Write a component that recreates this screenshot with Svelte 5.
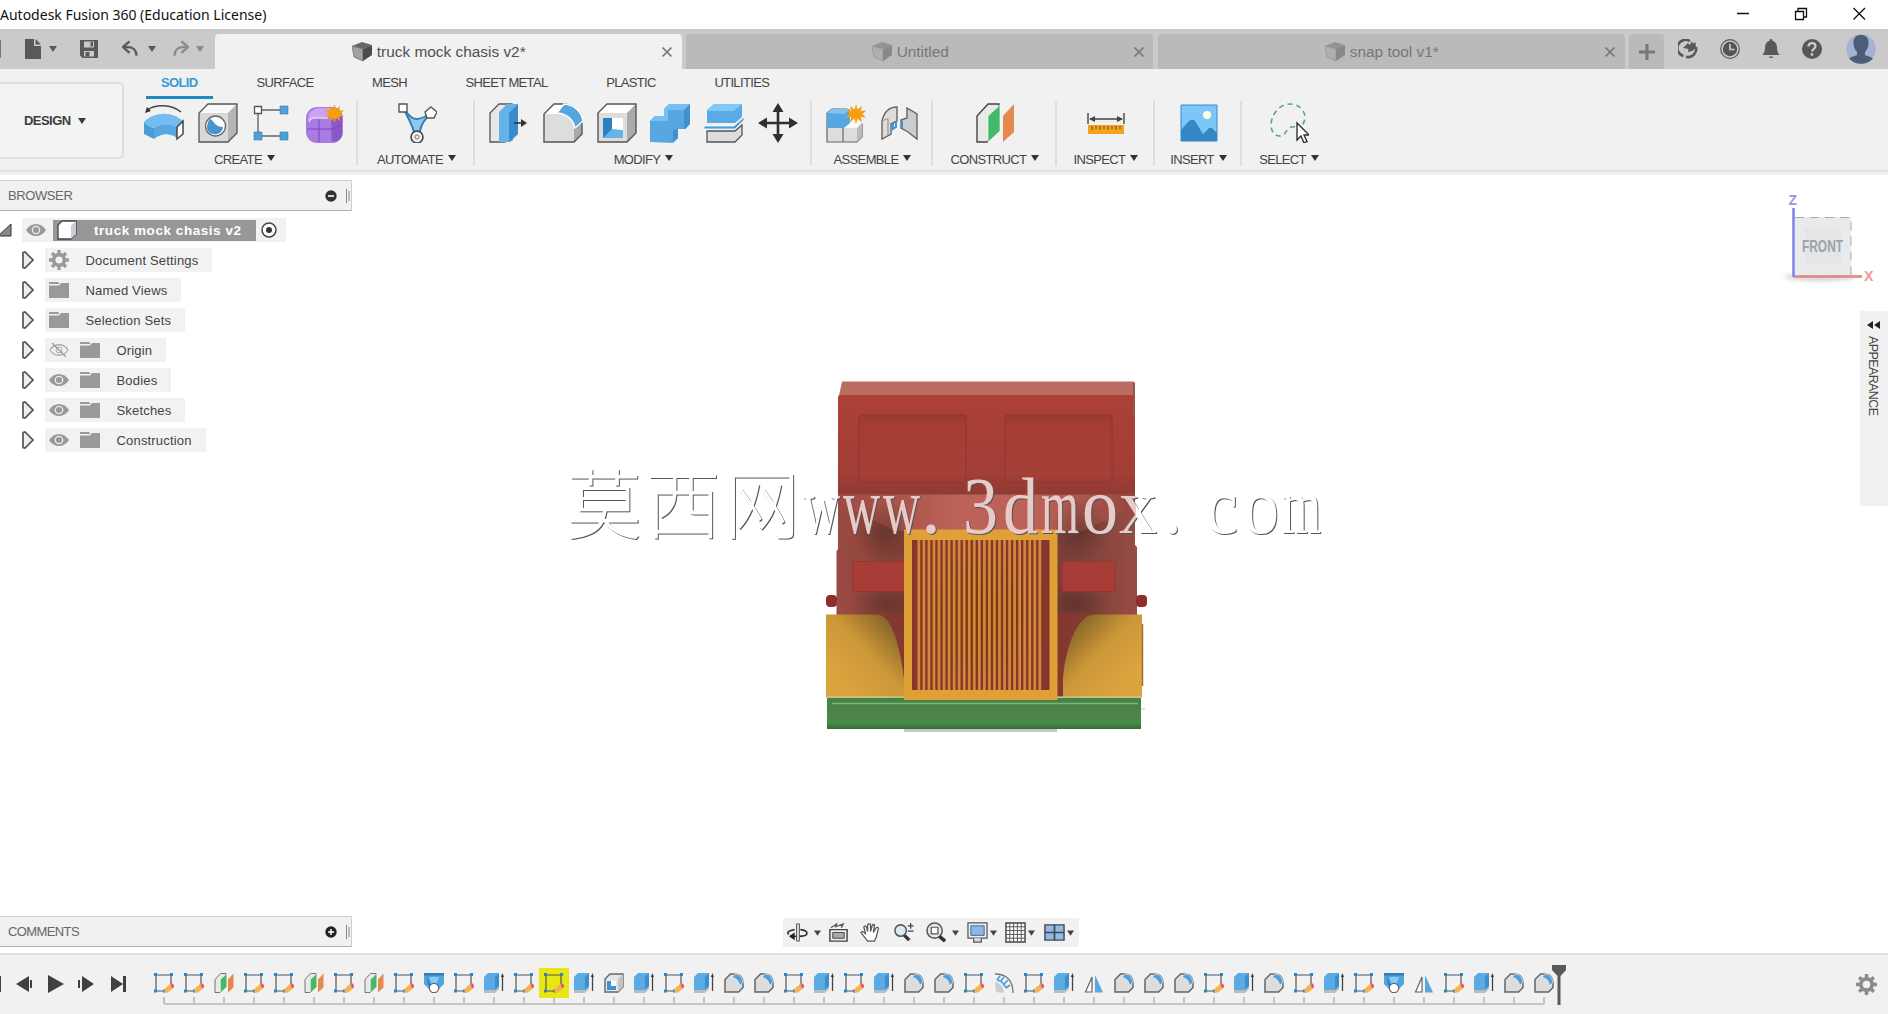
<script>
	const documents = [
		{ title: 'truck mock chasis v2*', active: true },
		{ title: 'Untitled', active: false },
		{ title: 'snap tool v1*', active: false }
	];

	const ribbonTabs = ['SOLID', 'SURFACE', 'MESH', 'SHEET METAL', 'PLASTIC', 'UTILITIES'];

	const groups = [
		{ label: 'CREATE', width: 230, icons: ['revolve', 'hole', 'rect-pattern', 'form'] },
		{ label: 'AUTOMATE', width: 117, icons: ['automate'] },
		{ label: 'MODIFY', width: 337, icons: ['press-pull', 'fillet', 'shell', 'combine', 'split', 'move'] },
		{ label: 'ASSEMBLE', width: 121, icons: ['component', 'joint'] },
		{ label: 'CONSTRUCT', width: 124, icons: ['plane'] },
		{ label: 'INSPECT', width: 98, icons: ['measure'] },
		{ label: 'INSERT', width: 87, icons: ['image'] },
		{ label: 'SELECT', width: 92, icons: ['select'] }
	];

	const tree = [
		{ label: 'Document Settings', icons: ['gear'] },
		{ label: 'Named Views', icons: ['folder'] },
		{ label: 'Selection Sets', icons: ['folder'] },
		{ label: 'Origin', icons: ['eye-off', 'folder'] },
		{ label: 'Bodies', icons: ['eye', 'folder'] },
		{ label: 'Sketches', icons: ['eye', 'folder'] },
		{ label: 'Construction', icons: ['eye', 'folder'] }
	];

	// s = sketch, p = plane, l = loft, e = extrude, h = shell, f = fillet, c = pattern, m = mirror
	const featureIcons = {
		s: 't-sketch', p: 'plane', l: 't-loft', e: 't-extrude',
		h: 't-shell', f: 't-fillet', c: 't-pattern', m: 't-mirror'
	};
	const timeline = 'sspsspspslsesseheseffseseffscsemfffsefseslmseff'.split('');
	const selectedFeature = 13;

	const watermark = [
		['莫', 566, 76], ['西', 645, 76], ['网', 724, 76],
		['w', 803, 37], ['w', 843, 37], ['w', 883, 37], ['.', 921, 20],
		['3', 963, 35], ['d', 1003, 35], ['m', 1041, 38], ['o', 1082, 36], ['x', 1119, 38],
		['.', 1163, 19], ['c', 1205, 33], ['o', 1243, 36], ['m', 1282, 39]
	];
	const slats = Array.from({ length: 25 }, (_, i) => 917.5 + i * 5.04);
</script>

<!--Icon sheet-->
<svg class="sheet" aria-hidden="true">
	<symbol id="caret" viewBox="0 0 8 6"><path d="M0 0h8L4 6z" fill="currentColor" /></symbol>
	<symbol id="file" viewBox="0 0 18 20"><path d="M1 0h9v7h7v13H1zM11.500 0 17 5.500h-5.500z" fill="#595959" /></symbol>
	<symbol id="save" viewBox="0 0 18 18"><path d="M0 0h18v18H2.500L0 15.500zM4 1.500v6h10v-6zM4 11v5.500h10V11z" fill="#595959" fill-rule="evenodd" /><path d="M10.500 2h2.500v4.500h-2.500zM5.500 12h4v4.500h-4z" fill="#595959" /></symbol>
	<symbol id="undo" viewBox="0 0 18 18"><path d="M8 1 1 7l7 6M1.500 7H7c5 0 8 4 8.500 9" fill="none" stroke="currentColor" stroke-width="2.500" /></symbol>
	<symbol id="doc" viewBox="0 0 20 20"><path d="M0 4 10 0l10 3-9 4z" fill="#666" /><path d="M0 4l11 3v12L2 15z" fill="#a2a2a2" stroke="#666" stroke-width=".7" /><path d="M11 7l9-4v10l-9 6z" fill="#4c4c4c" /></symbol>
	<symbol id="x" viewBox="0 0 12 12"><path d="M1.500 1.500l9 9M10.500 1.500l-9 9" stroke="currentColor" stroke-width="1.700" /></symbol>
	<symbol id="extensions" viewBox="0 0 20 20"><path d="M5.500 17A8.200 8.200 0 1 1 12 2.200M18 8A8.200 8.200 0 0 1 8 17.800" fill="none" stroke="#595959" stroke-width="2.600" /><path d="M5 9l5-5 1.500 2L14 2.500l1 2L17.500 3 18 9l-4 3-4 1 .5-3z" fill="#595959" /></symbol>
	<symbol id="clock" viewBox="0 0 20 20"><circle cx="10" cy="10" r="9.300" fill="none" stroke="#595959" stroke-width="1.200" /><circle cx="10" cy="10" r="7.200" fill="#555" /><path d="M10 5v5.500h4.500" fill="none" stroke="#ccc" stroke-width="1.700" /></symbol>
	<symbol id="bell" viewBox="0 0 18 20"><path d="M9 0c1 0 1.500.7 1.500 1.700C13.500 2.500 15 5 15 9c0 3 1 5 2.500 7H.5C2 14 3 12 3 9c0-4 1.500-6.500 4.500-7.300C7.500.7 8 0 9 0zM7 17.500h4c0 2-4 2-4 0z" fill="#595959" /></symbol>
	<symbol id="help" viewBox="0 0 20 20"><circle cx="10" cy="10" r="10" fill="#575757" /><path d="M6.500 7.500C6.500 2.800 13.500 3 13.500 7.300c0 2.500-3.400 2.600-3.400 5.200" fill="none" stroke="#ccc" stroke-width="2.200" /><circle cx="10" cy="15.500" r="1.400" fill="#ccc" /></symbol>
	<symbol id="avatar" viewBox="0 0 30 30"><circle cx="15" cy="15" r="14.700" fill="#a5b3d0" /><path d="M15 1c5 0 8 3 7.500 9-.3 3-1 5-3.500 8v3c4 1.500 6 2 8 3.500-6 7-18 7-24 0 2-1.500 4-2 8-3.500v-3c-2.500-3-3.200-5-3.500-8C7 4 10 1 15 1z" fill="#4c5d77" /></symbol>

	<symbol id="revolve" viewBox="0 0 40 40"><path d="M0 19c4 4 7 5 10 6v11L0 31z" fill="#4b9bd8" /><path d="M0 19c10-11 30-11 40 0l-8 7c-6-6-16-6-22-1-3-1-7-2-10-6z" fill="#74bcf0" /><path d="M10 25c6-5 16-5 23 0v10c-7-5-15-5-23 1z" fill="#58a7e1" /><path d="M33 24l6-6v13l-6 5z" fill="#fff" stroke="#444" stroke-width="1.500" /><path d="M3 7c9-6 24-6 34 2" fill="none" stroke="#444" stroke-width="1.500" /><path d="M1 10 3 4l4 4z" fill="#333" /></symbol>
	<symbol id="hole" viewBox="0 0 40 40"><path d="M1 39V10l9-9h29v29l-9 9z" fill="#d9d9d9" /><path d="M1 10l9-9h29l-9 9z" fill="#f8f8f8" /><path d="M30 10l9-9v29l-9 9z" fill="#b5b5b5" /><path d="M1 39V10l9-9h29v29l-9 9z" fill="none" stroke="#555" stroke-width="1.300" /><circle cx="17.500" cy="23" r="10" fill="#fff" stroke="#666" stroke-width="1.300" /><path d="M12 16c3 0 4 8 13 8-1 10-15 9-16 1 0-4 1-7 3-9z" fill="#4294d2" /></symbol>
	<symbol id="rect-pattern" viewBox="0 0 40 40"><path d="M7 7h26M7 7v26M7 33h26" stroke="#666" stroke-width="1.400" /><path d="M3.500 3.500h7v7h-7z" fill="#fff" stroke="#555" stroke-width="1.300" /><path d="M29 3h8v8h-8zM29 29h8v8h-8zM3 29h8v8H3z" fill="#4f9fdc" stroke="#2c7fbd" stroke-width=".6" /></symbol>
	<symbol id="spark" viewBox="0 0 20 20"><path d="M10 0l1.500 5.500L16 2l-1.200 5L20 6.500 16.500 10l3.500 3.500-5.200-.5 1.200 5-4.500-3.500L10 20l-1.500-5.500L4 18l1.200-5-5.200.5L3.500 10 0 6.500l5.200.5L4 2l4.500 3.500z" fill="#f79e0c" /></symbol>
	<symbol id="form" viewBox="0 0 40 40"><rect x="1" y="4" width="37" height="36" rx="11" fill="#a97ce2" /><path d="M3 17c0-8 6-12 12-12h12L24 14H10z" fill="#c9a5f1" /><path d="M28 15l9-4v20c0 4-4 8-9 8z" fill="#8a58c6" /><path d="M14 15v24M2 26h25l10-4M27 17v21" fill="none" stroke="#7a45bc" /><path d="M4 19q1-4 5-4h14" fill="none" stroke="#e7d6fa" stroke-width="1.300" /><use href="#spark" x="20" y="1" width="19" height="19" /></symbol>
	<symbol id="automate" viewBox="0 0 40 40"><path d="M8 8c5 12 8 14 10 25h4c2-12 4-14 11-22-7 4-9 5-13 5-5 0-7-3-12-8z" fill="#8ec8ed" stroke="#347fb2" stroke-width="2" /><path d="M2 1h8v8H2zM34 4l6 5-3 6h-7l-2-6z" fill="#fff" stroke="#555" stroke-width="1.400" /><circle cx="20" cy="34" r="6" fill="#eee" stroke="#444" stroke-width="1.600" /><circle cx="20" cy="34" r="2" fill="none" stroke="#777" /></symbol>
	<symbol id="press-pull" viewBox="0 0 40 40"><path d="M1 39V10l9-9h13v36l-8 2z" fill="#e7e7e7" stroke="#555" stroke-width="1.300" /><path d="M10 9l8-8h11v30l-8 8H10z" fill="#65b2eb" /><path d="M20 10l9-9v30l-9 8z" fill="#398bcb" /><path d="M25 20h10" stroke="#333" stroke-width="1.600" /><path d="M32 16l6 4-6 4z" fill="#333" /></symbol>
	<symbol id="fillet" viewBox="0 0 40 40"><path d="M1 39V11L11 1h8c12 0 20 8 20 22v8l-8 8z" fill="#ddd" /><path d="M1 11 11 1h10l-8 10z" fill="#fff" /><path d="M31 25l8-6v12l-8 8z" fill="#aaa" /><path d="M1 39V11L11 1h8c12 0 20 8 20 22v8l-8 8z" fill="none" stroke="#555" stroke-width="1.400" /><path d="M14 10l7-9c10 1 17 7 19 17l-8 7C30 16 24 11 14 10z" fill="#55a5df" stroke="#fff" stroke-width="1.300" /></symbol>
	<symbol id="shell" viewBox="0 0 40 40"><path d="M1 39V10l9-9h29v29l-9 9z" fill="#ddd" /><path d="M1 10l9-9h29l-9 9z" fill="#fff" /><path d="M30 10l9-9v29l-9 9z" fill="#aaa" /><path d="M1 39V10l9-9h29v29l-9 9z" fill="none" stroke="#555" stroke-width="1.400" /><path d="M6 15h20v20H6z" fill="#fff" /><path d="M6 15h9v11l11 1v8H6z" fill="#67b2e9" /><path d="M6 15h9v11l-9 9z" fill="#2d80bf" /></symbol>
	<symbol id="combine" viewBox="0 0 40 40"><path d="M0 39V18l5-5h9V6l5-5h21v20l-5 5h-7v9l-5 5z" fill="#58a7e1" /><path d="M0 18l5-5h9V6l5-5h21l-6 6H18v11z" fill="#75bff2" /><path d="M34 7l6-6v20l-5 5h-7v9l-5 4V27l4-1h7z" fill="#3f91d0" /></symbol>
	<symbol id="split" viewBox="0 0 40 40"><path d="M3 20V7l7-6h28v13l-7 6z" fill="#59aae5" /><path d="M3 7l7-6h28l-8 7H4z" fill="#82c8f7" /><path d="M3 39V28h28l7-6v10l-7 7z" fill="#ddd" stroke="#555" stroke-width="1.300" /><path d="M0 23h30l10-9v3l-9 9H0z" fill="#4b9bd4" stroke="#fff" stroke-width=".8" /></symbol>
	<symbol id="move" viewBox="0 0 40 40"><path d="M20 6v28M6 20h28" stroke="#2f2f2f" stroke-width="2.600" /><path d="M20 0l5.500 9h-11zM20 40l5.500-9h-11zM0 20l9-5.500v11zM40 20l-9-5.500v11z" fill="#2f2f2f" /></symbol>
	<symbol id="component" viewBox="0 0 40 40"><path d="M1 39V10l5-4h15v15h15v13l-5 5z" fill="#ddd" stroke="#666" stroke-width="1.200" /><path d="M17 25l5-5h14l-5 5z" fill="#fafafa" /><path d="M31 25l5-5v14l-5 5z" fill="#bbb" /><path d="M1 25V10l5-4h18v14l-6 5z" fill="#58a7e1" /><path d="M1 10l5-4h18l-6 5z" fill="#80c4f4" /><path d="M17 25v14" stroke="#666" stroke-width="1.200" /><use href="#spark" x="20" y="1" width="20" height="20" /></symbol>
	<symbol id="joint" viewBox="0 0 40 40"><path d="M3 36V18C5 9 10 4 18 4v14l-6 3v10z" fill="#ddd" stroke="#666" stroke-width="1.400" /><path d="M22 17l6-2V5l10 6v25l-9-7-7-4z" fill="#ccc" stroke="#666" stroke-width="1.400" /><path d="M3 18c2 0 2-2 6-2v16" fill="none" stroke="#888" /><path d="M14 20v6l3-2v-6M23 18v7" fill="none" stroke="#4294d2" stroke-width="2" /></symbol>
	<symbol id="plane" viewBox="0 0 40 40"><path d="M2 39V13L13 1h11v26L12 39z" fill="#e9e9e9" stroke="#444" stroke-width="1.400" /><path d="M13 13 25 2v26L13 39z" fill="#45b86a" stroke="#fff" stroke-width=".6" /><path d="M28 13 39 1v28L28 39z" fill="#e58a4e" /></symbol>
	<symbol id="measure" viewBox="0 0 40 40"><path d="M2 10v11M38 10v11M4 16h32" stroke="#444" stroke-width="1.400" /><path d="M3 16l6-3v6zM37 16l-6-3v6z" fill="#444" /><path d="M2 22h36v9H2z" fill="#f3a313" /><path d="M6 23v4M10 23v3M14 23v4M18 23v3M22 23v4M26 23v3M30 23v4M34 23v3" stroke="#744" stroke-width="1" /></symbol>
	<symbol id="image" viewBox="0 0 40 40"><path d="M2 2h36v36H2z" fill="#7cc7f8" stroke="#3b8ac6" /><path d="M2 27l8-9c2-2 4-2 6 0l8 13 5-5c2-2 4-1 5 0l4 4v8H2z" fill="#3587c6" /><circle cx="28" cy="12" r="4" fill="#fffde0" /></symbol>
	<symbol id="select" viewBox="0 0 40 40"><path d="M26 24C17 22 18 33 11 33 5 33 2 28 2 21 3 9 12 1 21 1c9 0 15 7 15 13 0 4-2 8-5 10" fill="none" stroke="#58a978" stroke-width="1.600" stroke-dasharray="5 4" /><path d="M28 20v17l4-4 3 7 3-1.500-3-6.500h5z" fill="#fff" stroke="#333" stroke-width="1.400" /></symbol>

	<symbol id="gear" viewBox="0 0 20 20"><circle cx="10" cy="10" r="5.400" fill="none" stroke="currentColor" stroke-width="3.600" /><path d="M10 0v4M10 16v4M0 10h4M16 10h4M3 3l3 3M14 14l3 3M17 3l-3 3M6 14l-3 3" stroke="currentColor" stroke-width="3.300" /></symbol>
	<symbol id="folder" viewBox="0 0 20 16"><path d="M0 0h9l1.500 2H0zM0 3.500h10L12 1h8v15H0z" fill="#999" /></symbol>
	<symbol id="eye" viewBox="0 0 20 14"><path d="M0 7c5-8 15-8 20 0-5 8-15 8-20 0z" fill="#999" /><circle cx="10" cy="7" r="3.700" fill="none" stroke="#eee" stroke-width="1.300" /></symbol>
	<symbol id="eye-off" viewBox="0 0 20 14"><path d="M1 7c4.500-7 13.500-7 18 0-4.500 7-13.500 7-18 0z" fill="none" stroke="#aaa" stroke-width="1.300" /><circle cx="10" cy="7" r="3" fill="none" stroke="#aaa" /><path d="M3 0l14 14" stroke="#999" stroke-width="1.300" /></symbol>
	<symbol id="arrow" viewBox="0 0 12 18"><path d="M1 1.500 3 1l8 8-8 8-2-.5z" fill="#eee" stroke="#555" stroke-width="1.700" /></symbol>
	<symbol id="body" viewBox="0 0 20 20"><path d="M1 19V5l4-4h14v13l-5 5z" fill="#fff" stroke="#445" stroke-width="1.300" /><path d="M14 19V6l5-5v13z" fill="#c9ccd5" /></symbol>

	<symbol id="t-sketch" viewBox="0 0 20 20"><path d="M2 2h15M2 2v16M17 2v9M2 18h8" stroke="#555" stroke-width="1.200" /><path d="M0 0h3v3H0zM16 0h3v3h-3zM0 16.500h3v3H0zM9 16.500h3v3H9z" fill="#2e83c3" /><path d="M10.500 16l6-5.500 3.500 4-6 5h-3.500z" fill="#f5b24e" /><path d="M16.500 12l2-1.700 2 3-2 2z" fill="#e0526c" /></symbol>
	<symbol id="t-loft" viewBox="0 0 20 20"><path d="M0 0h20v11l-5 5H5l-5-5z" fill="#4fa3de" /><path d="M5 4h10l-3 8H8z" fill="#8acbf3" /><path d="M0 0h20v2.500H0zM3 3l4 10-3-1z" fill="#347fb9" /><circle cx="10" cy="15" r="4.700" fill="#fff" stroke="#666" stroke-width="1.200" /></symbol>
	<symbol id="t-extrude" viewBox="0 0 20 20"><path d="M0 20v-5h11l4-4v5l-4 4z" fill="#bbb" /><path d="M0 17V4l4-4h11v13l-4 4z" fill="#5aabe5" /><path d="M11 4l4-4v13l-4 4z" fill="#3c8ecc" /><path d="M18.500 3v15" stroke="#444" stroke-width="1.300" /><path d="M16.700 4l1.800-4L20 4z" fill="#444" /></symbol>
	<symbol id="t-shell" viewBox="0 0 20 20"><path d="M1 19V6l5-5h13v13l-5 5z" fill="#e6e6e6" stroke="#666" stroke-width="1.400" /><path d="M14 6l5-5v13l-5 5z" fill="#c4c4c4" /><path d="M3 8h9v9H3z" fill="#fff" /><path d="M3 8h4v5h5v4H3z" fill="#4093d3" /></symbol>
	<symbol id="t-fillet" viewBox="0 0 20 20"><path d="M1 19V6.500L6.500 1H10c6 0 9 4 9 9v4.500L14.500 19z" fill="#ddd" stroke="#666" stroke-width="1.500" /><path d="M8 4.500 11 1c5 .5 7.500 4 8 8.500l-3.500 3C15 8 12 5 8 4.500z" fill="#4e9fdb" stroke="#fff" stroke-width=".6" /></symbol>
	<symbol id="t-mirror" viewBox="0 0 20 20"><path d="M1.500 19 8 4v15z" fill="#fff" stroke="#666" stroke-width="1.200" /><path d="M11 2l8 17.500h-8z" fill="#58a7df" /></symbol>
	<symbol id="t-pattern" viewBox="0 0 20 20"><path d="M1 1c12 0 18 7 18 19" fill="none" stroke="#777" stroke-width="1.300" /><path d="M1 9c5 1 9 5 9 11l-8-1z" fill="#ccc" /><path d="M3 7l3-4M6 9l4-5M9 12l5-5M12 15l4-3M3 7c4 1 7 3 9 8" fill="none" stroke="#4c9edb" stroke-width="1.700" /></symbol>

	<symbol id="orbit" viewBox="0 0 22 22"><path d="M14 8c9 1 10 7-2 7H6M8 8c-6 1-9 3-6 5" fill="none" stroke="#333" stroke-width="1.700" /><path d="M2 15l6-4v8z" fill="#222" /><path d="M10 2h3v18h-3z" fill="#ddd" stroke="#555" /></symbol>
	<symbol id="look" viewBox="0 0 22 22"><path d="M2 8h18v12H2z" fill="#eee" stroke="#444" stroke-width="1.500" /><path d="M5 11h12v6H5z" fill="#aaa" stroke="#444" /><path d="M3 6 9 2l-1 3 8-3-2 4" fill="none" stroke="#555" stroke-width="1.300" /></symbol>
	<symbol id="pan" viewBox="0 0 22 22"><path d="M8 20C6 17 3 14 1 11c2-2 4 0 5 2L4 5c1-2 3 0 3 1l1 4V3c1-2 3-1 3 0v7l2-7c1-1 3 0 2 1l-1 7 3-5c2-1 3 0 2 2l-2 8-2 4z" fill="#fff" stroke="#555" stroke-width="1.300" /></symbol>
	<symbol id="zoom" viewBox="0 0 22 22"><circle cx="8" cy="9" r="6" fill="#dde9f0" stroke="#555" stroke-width="1.600" /><path d="M12 14l5 5" stroke="#333" stroke-width="3.500" /><path d="M18.500 1v6M15.500 4h6M15.500 9.500h6" stroke="#444" stroke-width="1.300" /></symbol>
	<symbol id="fit" viewBox="0 0 22 22"><circle cx="9" cy="9" r="8" fill="#e5e9eb" stroke="#555" stroke-width="1.600" /><path d="M5.500 5.500h7v7h-7z" fill="#fff" stroke="#555" stroke-width="1.300" /><path d="M14 15l6 5" stroke="#333" stroke-width="3.800" /></symbol>
	<symbol id="display" viewBox="0 0 22 22"><path d="M1 1h20v16H1z" fill="#eee" stroke="#555" stroke-width="1.300" /><path d="M4 4h14v10H4z" fill="#8fb6e3" stroke="#38679c" /><path d="M7 17v4h8v-4" fill="#ddd" stroke="#555" stroke-width="1.300" /></symbol>
	<symbol id="grid" viewBox="0 0 22 22"><path d="M1 1h20v20H1z" fill="#fff" stroke="#444" stroke-width="1.500" /><path d="M5 1v20M9 1v20M13 1v20M17 1v20M1 5h20M1 9h20M1 13h20M1 17h20" stroke="#555" /></symbol>
	<symbol id="viewports" viewBox="0 0 22 22"><path d="M1 3h20v16H1z" fill="#95b8e1" stroke="#3b4a5c" stroke-width="1.500" /><path d="M11 3v16M1 11h20" stroke="#3b4a5c" stroke-width="1.800" /></symbol>
</svg>

<div class="app">
	<!--Window title-->
	<header class="titlebar">
		<span class="titlebar-text">Autodesk Fusion 360 (Education License)</span>
		<svg class="titlebar-controls" width="130" height="14" viewBox="0 0 130 14">
			<path d="M0 6.500h12M58.500 4.500h8v8h-8zM61 4V1.500h8.500V10H67M116.500 1l11.500 11.500M128 1l-11.500 11.500" fill="none" stroke="#111" stroke-width="1.300" />
		</svg>
	</header>

	<!--Quick access and documents-->
	<div class="topbar">
		<div class="quick">
			<span class="quick-edge"></span>
			<svg class="quick-file" width="18" height="20"><use href="#file" /></svg>
			<svg class="caret" width="8" height="6"><use href="#caret" /></svg>
			<svg class="quick-save" width="18" height="18"><use href="#save" /></svg>
			<svg class="quick-undo" width="17" height="18"><use href="#undo" /></svg>
			<svg class="caret" width="8" height="6"><use href="#caret" /></svg>
			<svg class="quick-redo" width="17" height="18"><use href="#undo" /></svg>
			<svg class="caret faded" width="8" height="6"><use href="#caret" /></svg>
		</div>
		{#each documents as doc}
			<div class="doc" class:active={doc.active}>
				<span class="doc-title">
					<svg width="20" height="20"><use href="#doc" /></svg>
					<span>{doc.title}</span>
				</span>
				<svg class="doc-close" width="12" height="12"><use href="#x" /></svg>
			</div>
		{/each}
		<div class="doc-add"><svg width="16" height="16" viewBox="0 0 16 16"><path d="M8 0v16M0 8h16" stroke="#777" stroke-width="3" /></svg></div>
		<div class="account">
			<svg width="20" height="20"><use href="#extensions" /></svg>
			<svg width="20" height="20"><use href="#clock" /></svg>
			<svg width="18" height="20"><use href="#bell" /></svg>
			<svg width="20" height="20"><use href="#help" /></svg>
			<svg class="avatar" width="30" height="30"><use href="#avatar" /></svg>
		</div>
	</div>

	<!--Ribbon-->
	<div class="ribbon">
		<button class="workspace">DESIGN <svg width="8" height="6"><use href="#caret" /></svg></button>
		<div class="ribbon-main">
			<nav class="ribbon-tabs">
				{#each ribbonTabs as tab, i}
					<span class="ribbon-tab" class:active={i === 0}>{tab}</span>
				{/each}
			</nav>
			<div class="ribbon-groups">
				{#each groups as group}
					<div class="group" style="width: {group.width}px">
						<div class="group-icons">
							{#each group.icons as icon}
								<svg width="40" height="40"><use href="#{icon}" /></svg>
							{/each}
						</div>
						<span class="group-label">{group.label}<svg width="8" height="6"><use href="#caret" /></svg></span>
					</div>
				{/each}
			</div>
		</div>
	</div>

	<!--Viewport-->
	<main class="viewport">
		<svg class="scene" width="1888" height="778" viewBox="0 175 1888 778">
			<defs>
				<linearGradient id="cab" x2="0" y2="1"><stop offset="0" stop-color="#ac4138" /><stop offset=".75" stop-color="#a23e36" /><stop offset="1" stop-color="#8c3a33" /></linearGradient>
				<linearGradient id="window" x2="0" y2="1"><stop offset="0" stop-color="#963a31" /><stop offset=".15" stop-color="#a53d34" /><stop offset=".85" stop-color="#a64037" /><stop offset="1" stop-color="#9b3e36" /></linearGradient>
				<linearGradient id="hood"><stop offset="0" stop-color="#a44a42" /><stop offset=".2" stop-color="#a9544b" /><stop offset=".4" stop-color="#bd6259" /><stop offset=".65" stop-color="#bd6259" /><stop offset=".85" stop-color="#a9544b" /><stop offset="1" stop-color="#94463f" /></linearGradient>
				<linearGradient id="lower"><stop offset="0" stop-color="#9c4b43" /><stop offset=".22" stop-color="#844138" /><stop offset=".78" stop-color="#7b4038" /><stop offset="1" stop-color="#974c44" /></linearGradient>
				<radialGradient id="shade"><stop offset="0" stop-color="#4a2721" stop-opacity=".5" /><stop offset="1" stop-color="#4a2721" stop-opacity="0" /></radialGradient>
				<linearGradient id="fender" x1="0" y1="1" x2="1" y2="0"><stop offset=".2" stop-color="#dca43e" /><stop offset=".55" stop-color="#cb9638" /><stop offset=".9" stop-color="#7d6027" /></linearGradient>
				<linearGradient id="fender-r" x1="1" y1="1" x2="0" y2="0"><stop offset=".2" stop-color="#dca43e" /><stop offset=".55" stop-color="#cb9638" /><stop offset=".9" stop-color="#7d6027" /></linearGradient>
				<radialGradient id="core"><stop offset="0" stop-color="#7a380b" /><stop offset="1" stop-color="#88362b" /></radialGradient>
				<linearGradient id="bumper" x2="0" y2="1"><stop offset="0" stop-color="#47833f" /><stop offset=".5" stop-color="#4f824b" /><stop offset=".8" stop-color="#438d46" /><stop offset="1" stop-color="#386b38" /></linearGradient>
				<linearGradient id="ink" gradientUnits="userSpaceOnUse" x1="838" x2="1136"><stop offset="0" stop-color="#fff" /><stop offset=".001" stop-color="#e8cbc8" /><stop offset=".999" stop-color="#e8cbc8" /><stop offset="1" stop-color="#fff" /></linearGradient>
			</defs>

			<!--Cab-->
			<path d="M842 381.500h291q2 0 2 2V398H838.500z" fill="#bb6d63" />
			<path d="M840 395h293l2 3v100H838v-100q0-3 2-3z" fill="url(#cab)" />
			<path d="M1133 383h2v32h-2z" fill="#93544d" />
			<rect x="859" y="414.500" width="107" height="68" rx="3" fill="url(#window)" stroke="#8f3931" stroke-width="1.200" />
			<rect x="1005" y="414.500" width="107" height="68" rx="3" fill="url(#window)" stroke="#8f3931" stroke-width="1.200" />
			<path d="M838 494h297v51l2 2v68H836.500v-64l1.500-2z" fill="url(#lower)" />
			<path d="M838 494.500h297V506l-52 25H895l-57-29z" fill="url(#hood)" />
			<ellipse cx="884" cy="533" rx="30" ry="32" fill="url(#shade)" />
			<ellipse cx="1080" cy="530" rx="30" ry="32" fill="url(#shade)" />
			<ellipse cx="887" cy="604" rx="38" ry="24" fill="url(#shade)" />
			<ellipse cx="1076" cy="604" rx="38" ry="24" fill="url(#shade)" />
			<path d="M874 613h226v84H874z" fill="#83392f" />
			<rect x="852.500" y="561.500" width="53" height="30" rx="2" fill="#a83d38" stroke="#98352f" />
			<rect x="1062" y="561.500" width="53" height="30" rx="2" fill="#a83d38" stroke="#98352f" />
			<rect x="826" y="595" width="11" height="12" rx="4" fill="#8e2d2c" />
			<rect x="1136" y="595" width="11" height="12" rx="4" fill="#8e2d2c" />

			<!--Fenders, grille, bumper-->
			<path d="M826 614.500h52c14 2 22 32 26 64v19h-78z" fill="url(#fender)" />
			<path d="M1142 614.500h-49c-17 2-28 36-30 64v19h79z" fill="url(#fender-r)" />
			<path d="M1142.500 624v62" stroke="#9a742f" stroke-width="1.500" />
			<path d="M904 729h153v3H904z" fill="#c2c7c1" />
			<path d="M827 697.500h314V729H827z" fill="url(#bumper)" />
			<path d="M827 697h314" stroke="#d4d6a7" />
			<path d="M832 703.500h306" stroke="#79b77b" stroke-width="1.300" />
			<path d="M1141 709h4" stroke="#b7cbb6" />
			<path d="M904 529.500h153.500V700H904z" fill="#dfa038" />
			<path d="M912 540h137.500v150H912z" fill="url(#core)" />
			{#each slats as x}
				<rect {x} y="540" width="2.700" height="150" fill="#d0893a" />
			{/each}

			<text class="watermark" y="533">{#each watermark as [glyph, x, width]}<tspan class:han={width === 76} {x} textLength={width} lengthAdjust="spacingAndGlyphs">{glyph}</tspan>{/each}</text>

			<!--View cube-->
			<ellipse class="cube-shadow" cx="1820" cy="277" rx="36" ry="4" fill="#d5d5d5" />
			<path d="M1795 217h56v58h-56z" fill="#e9eaeb" />
			<path d="M1805 228h36v36h-36z" fill="#e3e5e7" />
			<path d="M1795 217.500h56V275" fill="none" stroke="#aaa" stroke-dasharray="9 6" />
			<path d="M1794 276.500h68" stroke="#df8582" stroke-width="2.500" />
			<path d="M1793.500 208v69" stroke="#7f80e4" stroke-width="2.500" />
			<text class="cube-face" x="1802" y="251.500" textLength="41" lengthAdjust="spacingAndGlyphs">FRONT</text>
			<text class="cube-axis" x="1788.500" y="205" fill="#9a95ec">Z</text>
			<text class="cube-axis" x="1864" y="281" fill="#f29693">X</text>
		</svg>

		<aside class="browser">
			<div class="panel-head">
				<span>BROWSER</span>
				<svg width="25" height="14" viewBox="0 0 25 14"><circle cx="6" cy="7" r="5.700" fill="#333" /><path d="M3 7h6" stroke="#fff" stroke-width="1.600" /><path d="M21.500 0v14M24 2v10" stroke="#888" /></svg>
			</div>
			<div class="root">
				<svg width="12" height="14" viewBox="0 0 12 14"><path d="M11 1v12H-2z" fill="#888" stroke="#333" /></svg>
				<div class="root-row">
					<svg width="20" height="14"><use href="#eye" /></svg>
					<span class="root-name"><svg width="20" height="20"><use href="#body" /></svg>truck mock chasis v2</span>
					<svg width="16" height="16" viewBox="0 0 16 16"><circle cx="8" cy="8" r="7" fill="#fff" stroke="#444" stroke-width="1.500" /><circle cx="8" cy="8" r="3" fill="#333" /></svg>
				</div>
			</div>
			{#each tree as node}
				<div class="node">
					<svg width="12" height="18"><use href="#arrow" /></svg>
					<div class="node-row">
						{#each node.icons as icon}
							<span class="node-icon"><svg width="20" height={icon === 'gear' ? 20 : icon === 'folder' ? 16 : 14}><use href="#{icon}" /></svg></span>
						{/each}
						<span class="node-name">{node.label}</span>
					</div>
				</div>
			{/each}
		</aside>

		<aside class="appearance">
			<svg width="13" height="8" viewBox="0 0 13 8"><path d="M6 0v8L0 4zM13 0v8L7 4z" fill="#222" /></svg>
			<span>APPEARANCE</span>
		</aside>

		<div class="panel-head comments">
			<span>COMMENTS</span>
			<svg width="25" height="14" viewBox="0 0 25 14"><circle cx="6" cy="7" r="5.700" fill="#222" /><path d="M3 7h6M6 4v6" stroke="#fff" stroke-width="1.500" /><path d="M21.500 0v14M24 2v10" stroke="#888" /></svg>
		</div>

		<div class="navbar">
			<svg class="nav-orbit" width="21" height="21"><use href="#orbit" /></svg>
			<svg class="caret" width="7" height="6"><use href="#caret" /></svg>
			<svg class="nav-look" width="21" height="21"><use href="#look" /></svg>
			<svg class="nav-pan" width="21" height="21"><use href="#pan" /></svg>
			<svg class="nav-zoom" width="21" height="21"><use href="#zoom" /></svg>
			<svg class="nav-fit" width="21" height="21"><use href="#fit" /></svg>
			<svg class="caret" width="7" height="6"><use href="#caret" /></svg>
			<svg class="nav-display" width="21" height="21"><use href="#display" /></svg>
			<svg class="caret near" width="7" height="6"><use href="#caret" /></svg>
			<svg class="nav-grid" width="21" height="21"><use href="#grid" /></svg>
			<svg class="caret near" width="7" height="6"><use href="#caret" /></svg>
			<svg class="nav-views" width="21" height="21"><use href="#viewports" /></svg>
			<svg class="caret near" width="7" height="6"><use href="#caret" /></svg>
		</div>
	</main>

	<!--Timeline-->
	<footer class="timeline">
		<svg class="playback" width="130" height="20" viewBox="0 0 130 20">
			<path d="M0 2h1v16H0zM29 2v16L16 10zM30 6h2v8h-2zM48 1l16 9-16 9zM78 6h2v8h-2zM82 2l12 8-12 8zM111 2l12 8-12 8zM123 2h3v16h-3z" fill="#404040" />
		</svg>
		<div class="features">
			{#each timeline as feature, i}
				<div class="feature" class:selected={i === selectedFeature}>
					<svg width="20" height="20"><use href="#{featureIcons[feature]}" /></svg>
				</div>
			{/each}
		</div>
		<svg class="marker" width="14" height="40" viewBox="0 0 14 40"><path d="M0 0h14v5L8.500 11v29h-3V11L0 5z" fill="#595959" /></svg>
		<svg class="settings" width="21" height="21"><use href="#gear" /></svg>
	</footer>
</div>

<style>
	:global(body) {
		margin: 0;
		overflow: hidden;
	}
	svg {
		display: block;
		flex: none;
	}
	.sheet {
		position: absolute;
		width: 0;
		height: 0;
	}
	.app {
		display: flex;
		flex-direction: column;
		width: 1888px;
		height: 1014px;
		overflow: hidden;
		background: #fff;
		color: #444;
		font-family: "Liberation Sans", Arial, sans-serif;
		font-size: 13px;
	}

	/* Window title */
	.titlebar {
		display: flex;
		justify-content: space-between;
		height: 29px;
		box-sizing: border-box;
		padding: 4px 21px 0 0;
	}
	.titlebar-text {
		font: 14px/22px "Noto Sans", sans-serif;
		color: #111;
		white-space: nowrap;
	}
	.titlebar-controls {
		margin-top: 3px;
	}

	/* Quick access and documents */
	.topbar {
		display: flex;
		align-items: flex-end;
		height: 40px;
		background: #cacaca;
	}
	.quick {
		display: flex;
		align-items: center;
		width: 214.500px;
		height: 40px;
		color: #595959;
	}
	.quick-edge {
		width: 1px;
		height: 18px;
		background: #777;
	}
	.quick-file { margin: 0 7px 0 22.500px; }
	.quick-save { margin: 0 23.500px; }
	.quick-undo { margin-right: 9px; }
	.quick-redo {
		margin: 0 7.500px 0 16px;
		color: #8b8b8b;
		transform: scaleX(-1);
	}
	.faded { color: #8b8b8b; }
	.doc {
		display: flex;
		align-items: center;
		box-sizing: border-box;
		width: 467px;
		height: 35px;
		margin-right: 4.500px;
		padding-right: 8.500px;
		border-radius: 4px 4px 0 0;
		background: #bababa;
		color: #777;
		font-size: 15.400px;
	}
	.doc.active {
		background: #f1f1f1;
		color: #505050;
	}
	.doc-title {
		display: flex;
		flex: 1;
		align-items: center;
		justify-content: center;
		gap: 5px;
		padding-left: 2px;
	}
	.doc:not(.active) .doc-title svg { opacity: .45; }
	.doc-close { color: #777; }
	.doc-add {
		display: flex;
		align-items: center;
		justify-content: center;
		width: 35px;
		height: 35px;
		border-radius: 4px 4px 0 0;
		background: #bababa;
	}
	.account {
		display: flex;
		align-items: center;
		gap: 22px;
		height: 40px;
		padding-left: 14px;
	}
	.avatar { margin-left: 2px; }

	/* Ribbon */
	.ribbon {
		display: flex;
		height: 101px;
		border-bottom: 2px solid #e2e2e2;
		background: #f1f1f1;
		box-shadow: 0 3px #f1f1f1;
		margin-bottom: 3px;
		position: relative;
		z-index: 1;
	}
	.workspace {
		display: flex;
		align-items: center;
		gap: 7px;
		box-sizing: border-box;
		width: 124px;
		height: 77px;
		margin-top: 13px;
		padding: 0 0 0 24px;
		border: 2px solid #dedede;
		border-left: none;
		border-radius: 0 5px 5px 0;
		background: #f3f3f3;
		color: #3c3c3c;
		font: bold 13px "Liberation Sans", Arial, sans-serif;
		letter-spacing: -.55px;
	}
	.ribbon-main {
		padding-left: 4px;
	}
	.ribbon-tabs {
		display: flex;
		gap: 28.600px;
		padding-left: 17.500px;
	}
	.ribbon-tab {
		height: 27px;
		padding: 0 15px;
		border-bottom: 3px solid transparent;
		line-height: 28px;
		letter-spacing: -.65px;
	}
	.ribbon-tab.active {
		padding: 0 15.500px;
		border-color: #1f8ac0;
		color: #3a9bd2;
		font-weight: bold;
	}
	.ribbon-groups {
		display: flex;
		margin-top: 2px;
	}
	.group {
		box-sizing: border-box;
		height: 65px;
		padding: 2px 0 0 2px;
		border-right: 2px solid #dedede;
	}
	.group:first-child { padding-left: 5px; }
	.group:last-child { border: none; }
	.group-icons {
		display: flex;
		justify-content: center;
		gap: 13.700px;
	}
	.group-label {
		display: flex;
		align-items: center;
		justify-content: center;
		gap: 5px;
		height: 20px;
		margin-top: 6px;
		letter-spacing: -.65px;
	}
	.group-label svg { color: #333; margin-top: -3px; }

	/* Viewport */
	.viewport {
		position: relative;
		flex: 1;
		min-height: 0;
	}
	.scene {
		position: absolute;
		top: 0;
		left: 0;
	}
	.watermark {
		fill: url(#ink);
		font: 300 80px "Liberation Serif", "Noto Sans CJK SC", serif;
		filter: drop-shadow(1px 1px 0 #555);
	}
	.han { font-size: 76px; }
	.cube-shadow { filter: blur(2px); }
	.cube-face {
		fill: #9da2a8;
		font: bold 16px "Liberation Sans", sans-serif;
	}
	.cube-axis { font: bold 14px "Liberation Sans", sans-serif; }

	/* Browser tree */
	.browser {
		position: absolute;
		top: 5px;
		left: 0;
	}
	.panel-head {
		display: flex;
		align-items: center;
		justify-content: space-between;
		box-sizing: border-box;
		width: 352px;
		height: 31px;
		padding: 0 1px 0 8px;
		border: 1px solid #d0d0d0;
		border-left: none;
		border-bottom-color: #b0b0b0;
		background: #f1f1f1;
		color: #666;
		letter-spacing: -.4px;
	}
	.root {
		display: flex;
		align-items: center;
		gap: 10px;
		height: 30px;
		margin-top: 4px;
	}
	.root-row {
		display: flex;
		align-items: center;
		box-sizing: border-box;
		width: 264px;
		height: 24px;
		padding-left: 4px;
		background: #f2f2f2;
	}
	.root-name {
		display: flex;
		align-items: center;
		box-sizing: border-box;
		gap: 17px;
		width: 203px;
		height: 21px;
		margin: 0 5px 0 7px;
		padding-left: 4px;
		background: #979797;
		color: #fff;
		font-weight: bold;
		font-size: 13.500px;
		letter-spacing: .55px;
		white-space: nowrap;
	}
	.node {
		display: flex;
		align-items: center;
		gap: 11px;
		height: 30px;
		padding-left: 22px;
	}
	.node-row {
		display: flex;
		align-items: center;
		height: 24px;
		padding-right: 14px;
		background: #f2f2f2;
		letter-spacing: .18px;
	}
	.node-icon {
		width: 27.500px;
		padding-left: 3.500px;
		color: #999;
	}
	.node-name { padding-left: 9.500px; }

	.appearance {
		position: absolute;
		top: 136px;
		right: 0;
		display: flex;
		flex-direction: column;
		align-items: center;
		gap: 7px;
		box-sizing: border-box;
		width: 28px;
		height: 195px;
		padding: 10px 2px 0 0;
		background: #f1f1f1;
	}
	.appearance span {
		writing-mode: vertical-rl;
		font-size: 12.500px;
		letter-spacing: -.6px;
	}
	.comments {
		position: absolute;
		bottom: 6px;
		left: 0;
		letter-spacing: -.6px;
	}

	/* Navigation bar */
	.navbar {
		position: absolute;
		left: 783px;
		bottom: 6px;
		display: flex;
		align-items: center;
		box-sizing: border-box;
		width: 296px;
		height: 29px;
		padding-left: 4px;
		background: #f1f1f1;
	}
	.navbar .caret { margin-left: 5.500px; }
	.navbar .near { margin-left: 2px; }
	.nav-look { margin-left: 7px; }
	.nav-pan { margin-left: 11.500px; }
	.nav-zoom { margin-left: 11.500px; }
	.nav-fit { margin-left: 12px; }
	.nav-display { margin-left: 7.500px; }
	.nav-grid, .nav-views { margin-left: 8.500px; }

	/* Timeline */
	.timeline {
		display: flex;
		box-sizing: border-box;
		height: 61px;
		border-top: 2px solid #dedede;
		background: #f1f1f1;
	}
	.playback {
		margin: 19px 19px 0 0;
	}
	.features {
		display: flex;
		height: 50px;
		margin-top: 13px;
	}
	.feature {
		display: flex;
		flex-direction: column;
		align-items: center;
		box-sizing: border-box;
		width: 30px;
		height: 37px;
		padding-top: 5px;
		background: linear-gradient(#c3c3c3, #c3c3c3) 50% 29px / 2px 7px no-repeat, linear-gradient(#c6c6c6, #c6c6c6) 0 100% / 100% 2px no-repeat;
	}
	.feature:first-child { background-position: 50% 29px, 15px 100%; }
	.feature:last-child { background-position: 50% 29px, -15px 100%; }
	.feature.selected { background: linear-gradient(#e8e714, #e8e714) 0 0 / 100% 30px no-repeat, linear-gradient(#c3c3c3, #c3c3c3) 50% 29px / 2px 7px no-repeat, linear-gradient(#c6c6c6, #c6c6c6) 0 100% / 100% 2px no-repeat; }
	.marker {
		margin: 10px 0 0 -7px;
	}
	.settings {
		margin: 19px 11px 0 auto;
		color: #8b8b8b;
	}
</style>
